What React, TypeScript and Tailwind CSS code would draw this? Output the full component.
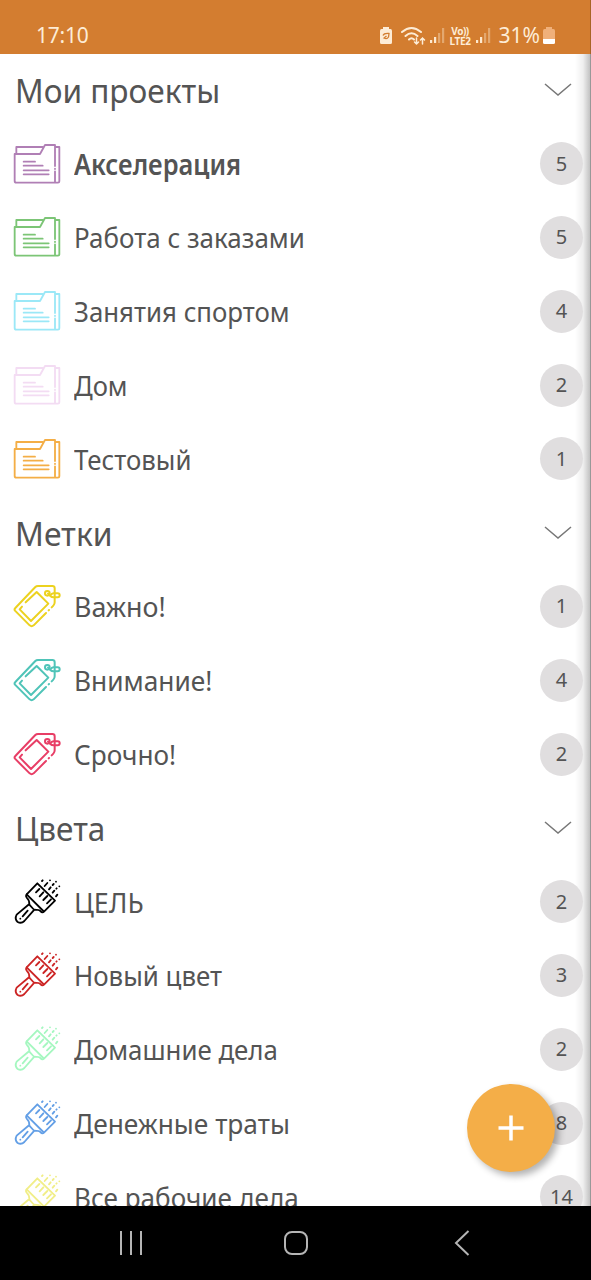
import React from 'react';

type IconKind = 'folder' | 'tag' | 'brush';

interface Item {
  title: string;
  count: number;
  color: string;
  fit: string;
  bold?: boolean;
}

interface Section {
  title: string;
  fit: string;
  icon: IconKind;
  items: Item[];
}

const SECTIONS: Section[] = [
  {
    title: 'Мои проекты',
    fit: 'scale-x-[0.957]',
    icon: 'folder',
    items: [
      { title: 'Акселерация', count: 5, color: '#b07fb5', fit: 'scale-x-[0.907]', bold: true },
      { title: 'Работа с заказами', count: 5, color: '#7cc576', fit: 'scale-x-[0.927]' },
      { title: 'Занятия спортом', count: 4, color: '#9be8f7', fit: 'scale-x-[0.922]' },
      { title: 'Дом', count: 2, color: '#f3dcf3', fit: 'scale-x-[0.914]' },
      { title: 'Тестовый', count: 1, color: '#f4ae46', fit: 'scale-x-[0.921]' },
    ],
  },
  {
    title: 'Метки',
    fit: 'scale-x-[0.965]',
    icon: 'tag',
    items: [
      { title: 'Важно!', count: 1, color: '#ecd21f', fit: 'scale-x-[0.957]' },
      { title: 'Внимание!', count: 4, color: '#4fc4b8', fit: 'scale-x-[0.938]' },
      { title: 'Срочно!', count: 2, color: '#e83e66', fit: 'scale-x-[0.935]' },
    ],
  },
  {
    title: 'Цвета',
    fit: 'scale-x-[0.955]',
    icon: 'brush',
    items: [
      { title: 'ЦЕЛЬ', count: 2, color: '#000000', fit: 'scale-x-[0.957]' },
      { title: 'Новый цвет', count: 3, color: '#cc2424', fit: 'scale-x-[0.924]' },
      { title: 'Домашние дела', count: 2, color: '#a5f7c0', fit: 'scale-x-[0.923]' },
      { title: 'Денежные траты', count: 8, color: '#639fe6', fit: 'scale-x-[0.939]' },
      { title: 'Все рабочие дела', count: 14, color: '#f1ee87', fit: 'scale-x-[0.932]' },
    ],
  },
];

function FolderIcon() {
  return (
    <svg viewBox="39 30 144 144" className="size-12" fill="none" stroke="currentColor" strokeWidth="5.500" strokeLinecap="round" strokeLinejoin="round">
      <path d="M49 72V51H128M165 51H178V154Q178 158 174 158H49Q44 158 44 153V72H120L135 45H165V108M165 124V158" />
      <path d="M165 116V117M71 95H105M71 107H128M71 121H146M71 133H146" />
    </svg>
  );
}

function TagIcon() {
  return (
    <svg viewBox="39 37 144 144" className="size-12" fill="none" stroke="currentColor" strokeWidth="6" strokeLinecap="round" strokeLinejoin="round">
      <path d="M138 130L101 167Q95 172 89 167L45 123Q42 119 46 115L106 52Q109 49 114 49H157Q164 49 164 56V98Q164 104 160 108L155 113M146 122L147 121" />
      <path d="M77 98L110 67L145 102L93 154L59 119L66 111" />
      <circle cx="142" cy="71" r="7" />
      <path d="M144 72L151 79Q155 83 161 83H173Q179 83 179 77Q179 71 173 71H160Q155 71 151 78" />
    </svg>
  );
}

function BrushIcon() {
  return (
    <svg viewBox="39 23 144 144" className="size-12" fill="none" stroke="currentColor" strokeWidth="5.500" strokeLinecap="round" strokeLinejoin="round">
      <path d="M112 39L165 91L132 124Q127 129 122 123Q118 118 103 118L73 152Q64 161 53 155Q43 146 50 133L88 101Q88 89 80 82Q76 77 80 72Z" />
      <path d="M80 72L130 122M118 56L108 66M130 66L119 78M142 77L130 89M153 87L141 99M88 103L100 116" />
      <path d="M83 121L68 138M61 145V145" />
      <path d="M126 32L128 30M134 47L142 38M150 30V30M147 57L152 51M158 44L161 41M168 34V34M158 67L163 61M169 55L170 54M178 48V48M168 78L172 73" />
    </svg>
  );
}

const ICONS = { folder: FolderIcon, tag: TagIcon, brush: BrushIcon };

function SectionHeader({ title, fit }: { title: string; fit: string }) {
  return (
    <div className="flex h-[73.8px] items-center justify-between pl-[15px] pr-[19px]">
      <h2 className={`origin-left pt-px text-[33px] leading-none ${fit}`}>{title}</h2>
      <svg viewBox="0 0 28 14" className="h-[14px] w-7" fill="none" stroke="#777" strokeWidth="1.500">
        <path d="M1 1L14 12L27 1" />
      </svg>
    </div>
  );
}

function ItemRow({ item, icon }: { item: Item; icon: IconKind }) {
  const Icon = ICONS[icon];
  return (
    <li className="flex h-[73.8px] items-center pl-[13px] pr-2">
      <span className="shrink-0" style={{ color: item.color }}>
        <Icon />
      </span>
      <span className={`ml-[13px] origin-left whitespace-nowrap text-[28px] leading-none ${item.bold ? 'font-semibold' : ''} ${item.fit}`}>
        {item.title}
      </span>
      <span className="ml-auto flex size-[43px] items-center justify-center rounded-full bg-[#e0dedf] text-[20px] leading-none">
        {item.count}
      </span>
    </li>
  );
}

function Signal({ className }: { className: string }) {
  return (
    <svg viewBox="0 0 15 16" className={`h-4 w-[15px] ${className}`} fill="#fde9cf">
      <path d="M0 12h2.2v3H0zM4 9h2.2v6H4z" />
      <path d="M8 5h2.2v10H8zM12 0h2.2v15H12z" opacity="0.4" />
    </svg>
  );
}

function StatusBar() {
  return (
    <header className="flex h-[54px] shrink-0 items-center bg-[#d37d30] pl-9 pr-9 pt-[17px] text-[#fdecd6]">
      <span className="text-[21px] leading-none tracking-[-0.2px]">17:10</span>
      <div className="ml-auto flex items-center">
        <svg viewBox="0 0 12 18" className="h-[18px] w-3">
          <path d="M3 0h6v2h1.5Q12 2 12 4v11.500q0 1.500-1.500 1.500h-9Q0 17 0 15.500V4Q0 2 1.500 2H3z" fill="#fdecd6" />
          <path d="M3 8.500Q4 6 9 6.500L8.500 10Q7 12.500 4 11L6.500 9" fill="none" stroke="#d37d30" strokeWidth="1.300" />
        </svg>
        <svg viewBox="0 0 25 20" className="ml-[9px] h-5 w-[25px]" fill="none" stroke="#fdecd6" strokeWidth="2" strokeLinecap="round">
          <path d="M1 6Q10.500-2 20 6M4.500 10Q10.500 4.500 16.500 10M8 13.500Q10.500 11 13 13.500" />
          <path d="M15.500 12V18M13.500 16L15.500 18L17.500 16M21.500 18V12M19.500 14L21.500 12L23.500 14" strokeWidth="1.500" />
        </svg>
        <Signal className="ml-[4px]" />
        <span className="ml-[4px] flex w-[23px] flex-col items-center text-[10px] font-bold leading-[10px]">
          <span className="tracking-[-0.5px]">Vo))</span>
          <span className="tracking-[-0.3px]">LTE2</span>
        </span>
        <Signal className="ml-[4px]" />
        <span className="ml-2 text-[21px] leading-none">31%</span>
        <svg viewBox="0 0 12 18" className="ml-[3px] h-[18px] w-3">
          <path d="M3 0h6v2h1.500Q12 2 12 4v8H0V4Q0 2 1.500 2H3z" fill="#f0b07a" />
          <path d="M0 12h12v3.500q0 1.500-1.500 1.500h-9Q0 17 0 15.500z" fill="#fff" />
        </svg>
      </div>
    </header>
  );
}

function NavBar() {
  return (
    <nav className="flex h-[74px] shrink-0 items-center bg-black pl-[118px]">
      <svg viewBox="0 0 24 24" className="size-6" stroke="#b5b5b5" strokeWidth="2">
        <path d="M3 0V24M13 0V24M23 0V24" />
      </svg>
      <svg viewBox="0 0 26 26" className="ml-[140px] size-[26px]" fill="none" stroke="#b5b5b5" strokeWidth="2">
        <rect x="3" y="2" width="22" height="22" rx="7" />
      </svg>
      <svg viewBox="0 0 16 26" className="ml-[146px] h-[26px] w-4" fill="none" stroke="#b5b5b5" strokeWidth="2">
        <path d="M14.500 1L2 13L14.500 25" />
      </svg>
    </nav>
  );
}

export default function App() {
  return (
    <div className="relative flex h-[1280px] w-[591px] flex-col overflow-hidden bg-white font-['Noto_Sans',sans-serif] text-[#545454]">
      <StatusBar />
      <main className="relative min-h-0 flex-1 overflow-hidden">
        {/* Drawer edge shadow */}
        <div className="absolute inset-y-0 right-0 w-4 bg-linear-to-r from-white via-[#efefef] to-[#bcbcbc]" />
        <div className="relative -mt-px">
          {SECTIONS.map(section => (
            <section key={section.title}>
              <SectionHeader title={section.title} fit={section.fit} />
              <ul>
                {section.items.map(item => (
                  <ItemRow key={item.title} item={item} icon={section.icon} />
                ))}
              </ul>
            </section>
          ))}
        </div>
        {/* Add button */}
        <button className="absolute bottom-[34px] right-9 flex size-[88px] items-center justify-center rounded-full bg-[#f4ae48] shadow-[4px_4px_7px_rgba(0,0,0,0.3)]">
          <svg viewBox="0 0 26 26" className="size-[26px]" stroke="#fff" strokeWidth="3.500">
            <path d="M13 0.500V25.500M0.500 13H25.500" />
          </svg>
        </button>
      </main>
      <NavBar />
      <div className="absolute inset-y-0 right-0 w-px bg-black/20" />
    </div>
  );
}
